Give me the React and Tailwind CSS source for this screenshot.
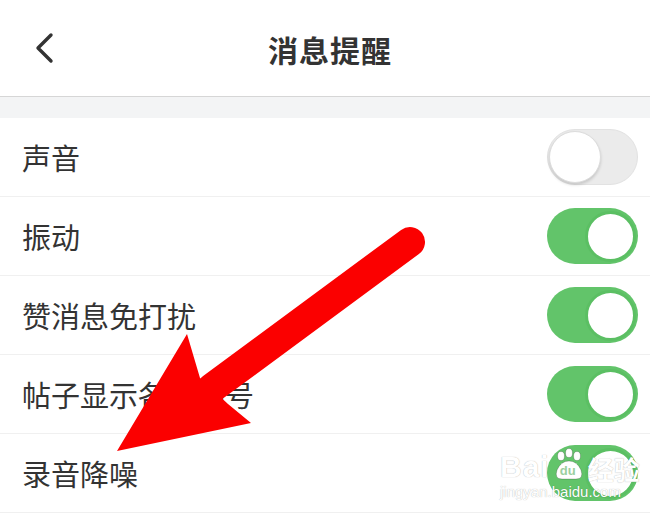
import React from "react";

const font = { fontFamily: '"Noto Sans CJK SC", "Noto Sans", sans-serif' };

function Toggle({ on }) {
  if (on) {
    return (
      <div className="w-[91px] h-[56px] rounded-full bg-[#62c46a] flex items-center justify-end pr-[2px] shrink-0">
        <div className="w-[51px] h-[51px] rounded-full bg-white border-[3px] border-[#5bbf63]" />
      </div>
    );
  }
  return (
    <div className="w-[91px] h-[56px] rounded-full bg-[#ebebeb] border border-[#e2e2e2] flex items-center justify-start pl-[1px] shrink-0">
      <div className="w-[52px] h-[52px] rounded-full bg-white border border-[#dcdcdc] shadow-[0_2px_3px_rgba(0,0,0,0.15)]" />
    </div>
  );
}

const rows = [
  { label: "声音", on: false },
  { label: "振动", on: true },
  { label: "赞消息免打扰", on: true },
  { label: "帖子显示各楼编号", on: true },
  { label: "录音降噪", on: true },
];

export default function App() {
  return (
    <div className="relative w-[650px] h-[516px] overflow-hidden bg-white" style={font}>
      <div className="h-[97px] flex items-center relative border-b border-[#d6d6d6]">
        <div className="w-[90px] pl-[34px] flex items-center">
          <svg width="22" height="32" viewBox="0 0 22 32">
            <path d="M17 3 L4 16 L17 29" fill="none" stroke="#333" strokeWidth="3.4" strokeLinecap="round" strokeLinejoin="round" />
          </svg>
        </div>
        <div className="flex-1 flex justify-center pr-[80px] pt-[2px]">
          <span className="text-[30px] font-bold text-[#333] tracking-[1px]">消息提醒</span>
        </div>
      </div>
      <div className="h-[21px] bg-[#f3f4f5]" />
      <div className="flex flex-col">
        {rows.map((r) => (
          <div key={r.label} className="h-[79px] flex items-center justify-between pl-[22px] pr-[12px] border-b border-[#f0f0f0]">
            <span className="text-[29px] text-[#333] leading-none">{r.label}</span>
            <Toggle on={r.on} />
          </div>
        ))}
      </div>

      {/* Baidu watermark */}
      <div className="absolute left-[500px] top-[448px] flex flex-col items-start text-white pointer-events-none" style={{ fontFamily: '"Liberation Sans", "Noto Sans CJK SC", sans-serif', textShadow: "0 0 1px rgba(0,0,0,0.35)" }}>
        <div className="flex items-end leading-none">
          <span className="text-[30px] font-bold tracking-[1px]">Bai</span>
          <span className="relative w-[34px] h-[34px] mx-[2px]">
            <svg width="34" height="34" viewBox="0 0 34 34" className="absolute left-0 top-0">
              <g fill="white" stroke="rgba(0,0,0,0.25)" strokeWidth="0.8">
                <ellipse cx="9" cy="8" rx="3.5" ry="4.5" />
                <ellipse cx="17" cy="5" rx="3.5" ry="4.5" />
                <ellipse cx="25" cy="8" rx="3.5" ry="4.5" />
                <path d="M5 22 Q9 13 17 13 Q25 13 29 22 Q32 31 24 31 L10 31 Q2 31 5 22 Z" />
              </g>
            </svg>
            <span className="absolute left-[8px] top-[16px] text-[13px] font-bold text-[#9ccf9f]" style={{ textShadow: "none" }}>du</span>
          </span>
          <span className="text-[26px] font-bold" style={{ fontFamily: '"Noto Sans CJK SC", sans-serif' }}>经验</span>
        </div>
        <span className="text-[15px] mt-[2px] leading-none">jingyan.baidu.com</span>
      </div>

      {/* red arrow overlay */}
      <svg className="absolute left-0 top-0 pointer-events-none" width="650" height="516" viewBox="0 0 650 516">
        <line x1="410" y1="242" x2="212" y2="388" stroke="#fb0000" strokeWidth="30" strokeLinecap="round" />
        <polygon points="117,451 187,334 200,378 228,404 251,423" fill="#fb0000" />
      </svg>
    </div>
  );
}
